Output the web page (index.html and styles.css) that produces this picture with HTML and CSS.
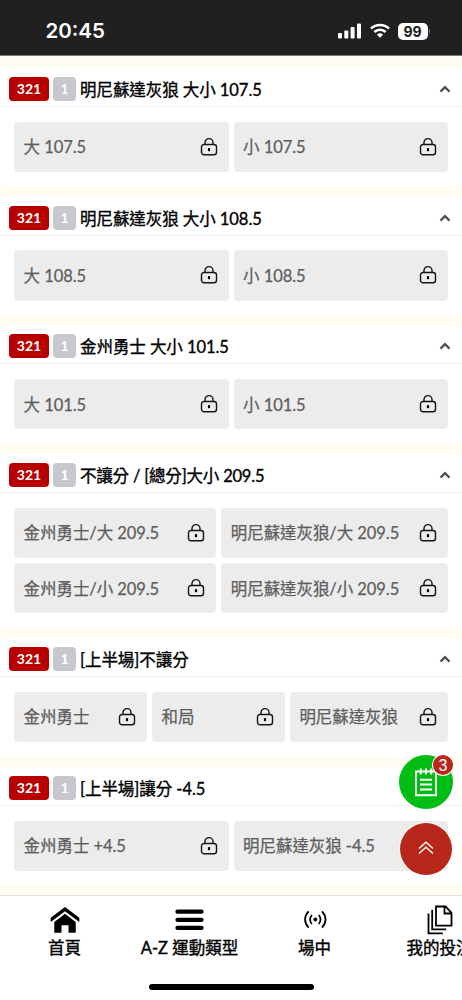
FILE: index.html
```html
<!DOCTYPE html>
<html lang="zh-Hant">
<head>
<meta charset="utf-8">
<meta name="viewport" content="width=device-width, initial-scale=1">
<title>場中投注</title>
<link rel="stylesheet" href="styles.css">
</head>
<body>
<svg class="sprite" aria-hidden="true">
  <symbol id="lock" viewBox="0 0 18 20"><path d="M5 7.500V5.600a4 4 0 0 1 8 0v1.900M4 7.500h10a2.500 2.500 0 0 1 2.500 2.500v5.200a2.500 2.500 0 0 1-2.500 2.500H4a2.500 2.500 0 0 1-2.500-2.500V10A2.500 2.500 0 0 1 4 7.500z" fill="none" stroke="#151515" stroke-width="1.400"/><rect x="7.900" y="10.900" width="2.200" height="3.300" rx=".8" fill="#000"/></symbol>
  <symbol id="up" viewBox="0 0 12 8"><path d="M1.500 6.600 6 2.200l4.500 4.400" fill="none" stroke="#505050" stroke-width="2.300"/></symbol>
</svg>
<div class="phone">
  <header class="status">
    <span class="clock">20:45</span>
    <div class="signals">
      <svg class="bars" viewBox="0 0 24 16" fill="#fff"><rect x="0" y="10" width="4" height="5.500" rx="1"/><rect x="6.300" y="7.500" width="4" height="8" rx="1"/><rect x="12.600" y="4" width="4" height="11.500" rx="1"/><rect x="19" y=".5" width="4" height="15" rx="1"/></svg>
      <svg class="wifi" viewBox="0 0 20 16" fill="none" stroke="#fff" stroke-width="2.500"><path d="M1 5.500a13 13 0 0 1 18 0M4.400 9a8 8 0 0 1 11.200 0"/><path d="M10 14.800 6.900 11.800a4.500 4.500 0 0 1 6.200 0z" fill="#fff" stroke="none"/></svg>
      <span class="battery">99</span><span class="battery-tip"></span>
    </div>
  </header>
  <main class="markets">
    <section class="card">
      <h2 class="head"><span class="code">321</span><span class="count">1</span><span class="title">明尼蘇達灰狼 大小 107.5</span><svg class="up"><use href="#up"/></svg></h2>
      <div class="options halves">
        <div class="option"><span>大 107.5</span><svg class="lock"><use href="#lock"/></svg></div>
        <div class="option"><span>小 107.5</span><svg class="lock"><use href="#lock"/></svg></div>
      </div>
    </section>
    <section class="card">
      <h2 class="head"><span class="code">321</span><span class="count">1</span><span class="title">明尼蘇達灰狼 大小 108.5</span><svg class="up"><use href="#up"/></svg></h2>
      <div class="options halves">
        <div class="option"><span>大 108.5</span><svg class="lock"><use href="#lock"/></svg></div>
        <div class="option"><span>小 108.5</span><svg class="lock"><use href="#lock"/></svg></div>
      </div>
    </section>
    <section class="card">
      <h2 class="head"><span class="code">321</span><span class="count">1</span><span class="title">金州勇士 大小 101.5</span><svg class="up"><use href="#up"/></svg></h2>
      <div class="options halves">
        <div class="option"><span>大 101.5</span><svg class="lock"><use href="#lock"/></svg></div>
        <div class="option"><span>小 101.5</span><svg class="lock"><use href="#lock"/></svg></div>
      </div>
    </section>
    <section class="card">
      <h2 class="head"><span class="code">321</span><span class="count">1</span><span class="title tight">不讓分 / [總分]大小 209.5</span><svg class="up"><use href="#up"/></svg></h2>
      <div class="options combo">
        <div class="option"><span>金州勇士/大 209.5</span><svg class="lock"><use href="#lock"/></svg></div>
        <div class="option"><span>明尼蘇達灰狼/大 209.5</span><svg class="lock"><use href="#lock"/></svg></div>
        <div class="option"><span>金州勇士/小 209.5</span><svg class="lock"><use href="#lock"/></svg></div>
        <div class="option"><span>明尼蘇達灰狼/小 209.5</span><svg class="lock"><use href="#lock"/></svg></div>
      </div>
    </section>
    <section class="card">
      <h2 class="head"><span class="code">321</span><span class="count">1</span><span class="title">[上半場]不讓分</span><svg class="up"><use href="#up"/></svg></h2>
      <div class="options thirds">
        <div class="option"><span>金州勇士</span><svg class="lock"><use href="#lock"/></svg></div>
        <div class="option"><span>和局</span><svg class="lock"><use href="#lock"/></svg></div>
        <div class="option"><span>明尼蘇達灰狼</span><svg class="lock"><use href="#lock"/></svg></div>
      </div>
    </section>
    <section class="card">
      <h2 class="head"><span class="code">321</span><span class="count">1</span><span class="title">[上半場]讓分 -4.5</span><svg class="up"><use href="#up"/></svg></h2>
      <div class="options halves">
        <div class="option"><span>金州勇士 +4.5</span><svg class="lock"><use href="#lock"/></svg></div>
        <div class="option"><span>明尼蘇達灰狼 -4.5</span><svg class="lock"><use href="#lock"/></svg></div>
      </div>
    </section>
  </main>
  <nav class="tabs">
    <a class="tab"><svg class="tab-icon" viewBox="0 0 32 28"><path d="M1.700 10.800 16 0l14.300 10.800v4.100L16 4.300 1.700 14.900z"/><path d="M16 6.800 26.700 15v10.700h-7.200v-7.400h-7v7.400H5.300V15z"/></svg><span>首頁</span></a>
    <a class="tab"><svg class="tab-icon" viewBox="0 0 32 28"><path d="M3.500 4.700h24M3.500 12.800h24M3.500 20.900h24" stroke="#000" stroke-width="4.300" stroke-linecap="round"/></svg><span>A-Z 運動類型</span></a>
    <a class="tab"><svg class="tab-icon" viewBox="0 0 32 28" fill="none" stroke="#000" stroke-width="1.800"><circle cx="16.300" cy="12.500" r="1.900" fill="#000" stroke="none"/><path d="M12.900 8a6.500 6.500 0 0 0 0 9M19.700 8a6.500 6.500 0 0 1 0 9M9.600 4.300c-4.700 4.900-4.700 11.500 0 16.400M23 4.300c4.700 4.900 4.700 11.500 0 16.400"/></svg><span>場中</span></a>
    <a class="tab"><svg class="tab-icon" viewBox="0 0 32 28" fill="none" stroke="#000" stroke-width="1.800"><path d="M12 -.5h9.500l6 6.300v12.900H12zM20.500 -.5v7h7M8.200 2.800v19.500h14M4.500 6.500v19.800h14.300"/></svg><span>我的投注</span></a>
  </nav>
  <div class="home-bar"></div>
  <button class="slip" aria-label="投注單"><svg viewBox="0 0 24 32" fill="none" stroke="#fff" stroke-width="1.900"><path d="M2 5.500h20v23.700H2zM6.700 2.500v6M12 2.500v6M17.300 2.500v6M6 13.700h12M6 18.500h12M6 23.500h12"/></svg><span class="badge">3</span></button>
  <button class="top" aria-label="回到頂部"><svg viewBox="0 0 16 14" fill="none" stroke="#fff" stroke-width="1.300"><path d="M1 7.500 8 1.200l7 6.300M1 12.500l7-6.300 7 6.300"/></svg></button>
</div>
</body>
</html>
```
FILE: styles.css
```css
* { box-sizing: border-box; }
body { margin: 0; }
.sprite { display: none; }
.phone {
  position: relative;
  display: flex;
  flex-direction: column;
  width: 462px;
  height: 1000px;
  overflow: hidden;
  background: #fff;
  color: #000;
  font: 400 16.500px/20px Lato, "Noto Sans CJK TC", sans-serif;
}
.status {
  display: flex;
  flex: none;
  justify-content: space-between;
  height: 56px;
  padding: 20px 32px 0 45.500px;
  background: #202020;
  border-bottom: 1px solid #77777b;
  color: #fff;
}
.clock { font: 600 20.500px/22px Inter, sans-serif; }
.signals { display: flex; align-items: center; height: 22px; }
.bars { width: 24px; height: 16px; }
.wifi { width: 20px; height: 16px; margin: 0 8px; }
.battery {
  width: 30px;
  height: 17px;
  border-radius: 5px;
  background: #fff;
  color: #202020;
  text-align: center;
  font: 700 14px/17px Inter, sans-serif;
}
.battery-tip { width: 1.500px; height: 5px; margin-left: 1px; border-radius: 0 2px 2px 0; background: #777; }
.markets {
  display: flex;
  flex: none;
  flex-direction: column;
  gap: 10.900px;
  height: 839px;
  padding-top: 12.100px;
  background: #fffdf3;
}
.card { flex: none; padding-bottom: 14.200px; border-radius: 5px; background: #fff; }
.head {
  display: flex;
  align-items: center;
  height: 38.800px;
  margin: 0;
  padding: 4px 11px 0 9px;
  border-bottom: 1px solid #ededf2;
  font-size: 16.500px;
  font-weight: 400;
}
.code, .count {
  height: 24px;
  border-radius: 4px;
  color: #fff;
  text-align: center;
  font: 700 14px/24px Lato, sans-serif;
}
.code { width: 40px; background: #b90000; }
.count { width: 23px; margin: 0 4px; background: #c8c7ce; }
.title {
  flex: 1;
  padding-top: 1.600px;
  letter-spacing: -.06px;
  white-space: nowrap;
  -webkit-text-stroke: .35px #000;
}
.tight { letter-spacing: -.2px; }
.up { width: 12px; height: 8px; }
.options { display: grid; gap: 5px; padding: 14.700px 14px 0; }
.halves { grid-template-columns: 1fr 1fr; }
.combo { grid-template-columns: 202.200px 1fr; }
.thirds { grid-template-columns: 133px 132.800px 1fr; }
.option {
  display: flex;
  align-items: center;
  justify-content: space-between;
  height: 50.200px;
  padding: 0 11px 0 9.600px;
  border-radius: 4px;
  background: #ececec;
  color: #5e5e5e;
  white-space: nowrap;
  -webkit-text-stroke: .25px #5e5e5e;
}
.option span { padding-top: 1px; letter-spacing: -.07px; }
.lock { width: 18px; height: 20px; }
.tabs {
  display: flex;
  flex: none;
  height: 89px;
  padding: 11px 0 0 2px;
  border-top: 1px solid #dedede;
}
.tab {
  display: flex;
  flex: 0 0 125px;
  flex-direction: column;
  align-items: center;
  gap: 3px;
  white-space: nowrap;
  -webkit-text-stroke: .4px #000;
}
.tab-icon { width: 32px; height: 28px; overflow: visible; }
.home-bar { flex: none; align-self: center; width: 165px; height: 6px; border-radius: 3px; background: #000; }
.slip, .top {
  position: absolute;
  display: grid;
  place-items: center;
  padding: 0;
  border: 0;
  border-radius: 50%;
}
.slip { left: 399px; top: 755px; width: 54px; height: 54px; background: #00bd14; }
.slip svg { width: 24px; height: 32px; }
.top { left: 400px; top: 823px; width: 52px; height: 52px; background: #b8271c; box-shadow: 0 0 0 1px #fff; }
.top svg { width: 16px; height: 14px; margin-bottom: 3px; }
.badge {
  position: absolute;
  left: 34px;
  top: 0;
  width: 20px;
  height: 20px;
  border-radius: 50%;
  background: #b8271c;
  box-shadow: 0 0 0 1px #fff;
  color: #fff;
  font: 500 16px/21px "Liberation Sans", sans-serif;
}
```
